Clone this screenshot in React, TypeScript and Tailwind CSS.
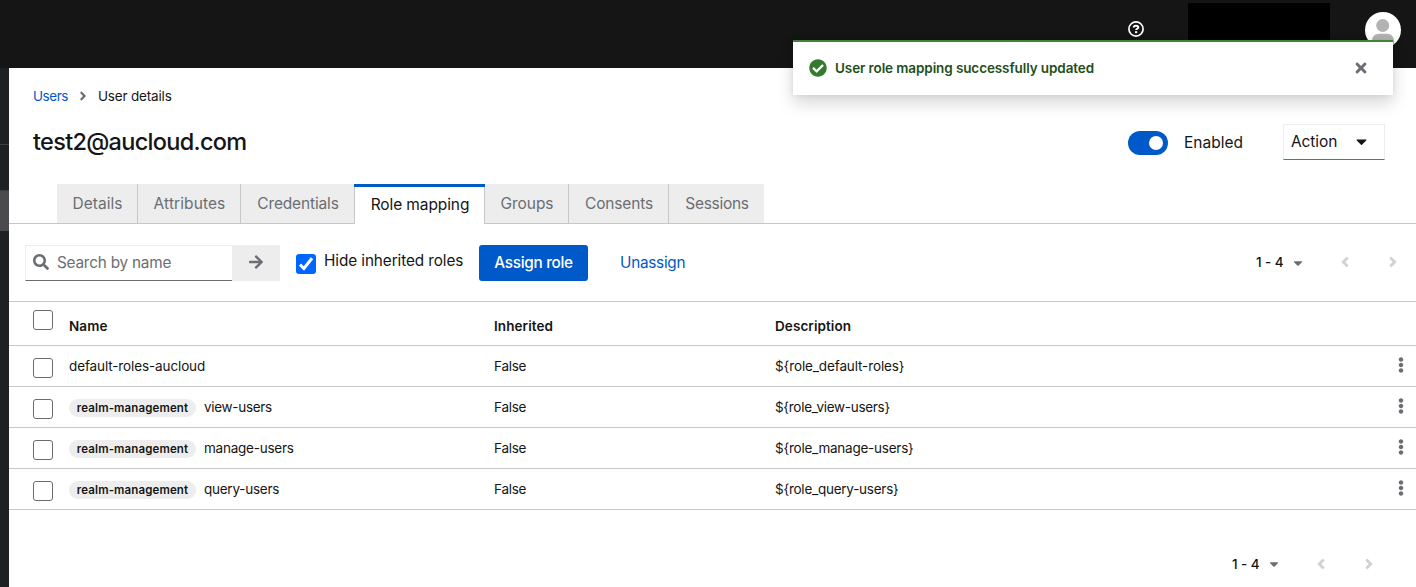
import React from "react";
import {
  FaAngleLeft,
  FaAngleRight,
  FaArrowRight,
  FaCaretDown,
  FaCheckCircle,
  FaEllipsisV,
  FaSearch,
  FaTimes,
} from "react-icons/fa";

const tabs = [
  { label: "Details", box: "w-[81px]", text: "tracking-[0.02px]" },
  { label: "Attributes", box: "w-[103px]", text: "tracking-[0.1px]" },
  { label: "Credentials", box: "w-[114px]", text: "tracking-[-0.15px]" },
  { label: "Role mapping", box: "w-[130px]", text: "tracking-[-0.1px]", active: true },
  { label: "Groups", box: "w-[84px]", text: "tracking-[-0.05px]" },
  { label: "Consents", box: "w-[100px]", text: "tracking-[-0.15px]" },
  { label: "Sessions", box: "w-[95px]", text: "tracking-[-0.3px]" },
];

const rows = [
  {
    client: "",
    name: "default-roles-aucloud",
    description: "${role_default-roles}",
    text: "tracking-[-0.12px]",
  },
  {
    client: "realm-management",
    name: "view-users",
    description: "${role_view-users}",
    text: "tracking-[-0.3px]",
  },
  {
    client: "realm-management",
    name: "manage-users",
    description: "${role_manage-users}",
    text: "tracking-[-0.24px]",
  },
  {
    client: "realm-management",
    name: "query-users",
    description: "${role_query-users}",
    text: "tracking-[-0.25px]",
  },
];

function Checkbox() {
  return <span className="block size-5 shrink-0 rounded-[3px] border border-[#6b6b6b] bg-white" />;
}

function HelpIcon() {
  return (
    <svg viewBox="0 0 16 16" className="size-4" fill="none" stroke="white">
      <circle cx="8" cy="8" r="7.1" strokeWidth="1.7" />
      <path d="M5.700 6.500C5.800 5.100 6.800 4.700 8 4.700c1.300 0 2.300.6 2.300 1.700 0 1.400-2.200 1.300-2.200 2.600" strokeWidth="2" />
      <path d="M7 11.200h2.200" strokeWidth="2" />
    </svg>
  );
}

function Avatar() {
  return (
    <svg viewBox="0 0 36 36" className="size-9">
      <defs>
        <clipPath id="avatar">
          <circle cx="18" cy="18" r="18" />
        </clipPath>
      </defs>
      <g clipPath="url(#avatar)">
        <rect width="36" height="36" fill="#fff" />
        <circle cx="17.7" cy="13.5" r="6.5" fill="#b3b3b3" />
        <path d="M7 36v-7c0-4.500 3-7.300 7-7.300h8c4 0 7 2.800 7 7.300v7z" fill="#b3b3b3" />
      </g>
    </svg>
  );
}

function Pagination() {
  return (
    <div className="flex h-5 items-center text-[#d2d2d2]">
      <span className="w-[35px] whitespace-nowrap text-[13.5px] font-medium tracking-[-0.1px] text-[#151515]">
        1 - 4
      </span>
      <FaCaretDown className="size-[14px] text-[#6a6e73]" />
      <FaAngleLeft className="-mt-px ml-[32px] size-4" stroke="currentColor" strokeWidth="14" />
      <FaAngleRight className="-mt-px ml-[32px] size-4" stroke="currentColor" strokeWidth="14" />
    </div>
  );
}

export default function App() {
  return (
    <div className="relative flex h-[587px] w-[1416px] flex-col overflow-hidden bg-white font-['Inter',sans-serif] text-[#151515]">
      <header className="flex h-[68px] shrink-0 items-start bg-[#151515]">
        <div className="ml-[1128px] mt-[21px]">
          <HelpIcon />
        </div>
        <div className="ml-[44px] mt-[3px] h-[42px] w-[142px] bg-black" />
        <div className="ml-[35px] mt-[12px]">
          <Avatar />
        </div>
      </header>

      <div className="flex min-h-0 flex-1">
        <aside className="flex w-[9px] shrink-0 flex-col bg-[#1e2124]">
          <div className="h-[77px] border-b border-[#3c3f42]" />
          <div className="mt-[45px] h-[41px] border-t border-[#3c3f42] bg-[#4b4b4d]" />
        </aside>

        <main className="flex min-w-0 flex-1 flex-col">
          <nav className="mt-[18px] flex h-5 items-center pl-6 text-[13.5px]">
            <a className="w-[35px] tracking-[-0.45px] text-[#0059c8]">Users</a>
            <FaAngleRight className="-mt-px ml-[8px] mr-[8px] size-[14px] text-[#6a6e73]" />
            <span className="tracking-[-0.18px]">User details</span>
          </nav>

          <div className="flex h-[78px] items-center pb-[6px] pl-6">
            <h1 className="w-[1095px] text-[23.5px] font-medium tracking-[-0.7px]">test2@aucloud.com</h1>
            <span className="mt-[2px] flex h-6 w-10 items-center justify-end rounded-full bg-[#0059c8] pr-[5px]">
              <span className="size-[14px] rounded-full bg-white" />
            </span>
            <span className="ml-4 mt-[2px] w-[99px] text-[15.5px]">Enabled</span>
            <button className="flex h-9 w-[102px] items-center justify-between border border-[#ededed] border-b-[#6a6e73] pl-[7px] pr-[14px] text-[15.5px] tracking-[-0.1px]">
              <span>Action</span>
              <FaCaretDown className="-mt-[2px] size-[17px]" />
            </button>
          </div>

          <div className="flex h-10 shrink-0 border-b border-[#c7c7c7] pl-12">
            {tabs.map((tab) =>
              tab.active ? (
                <div key={tab.label} className={`${tab.box} z-10 -ml-px box-content flex h-10 flex-col pr-px`}>
                  <div className="-mr-px h-[3px] shrink-0 bg-[#0059c8]" />
                  <div
                    className={`${tab.text} -mr-px flex flex-1 items-center justify-center border-x border-[#c7c7c7] bg-white pb-[2px] pl-px text-[15.5px]`}
                  >
                    {tab.label}
                  </div>
                </div>
              ) : (
                <div
                  key={tab.label}
                  className={`${tab.box} ${tab.text} flex h-[39px] items-center justify-center border-r border-[#c7c7c7] bg-[#ededed] pl-px pt-px text-[15.5px] text-[#6a6e73] last:border-r-0`}
                >
                  {tab.label}
                </div>
              ),
            )}
          </div>

          <div className="flex h-[78px] shrink-0 items-center border-b border-[#c7c7c7] pl-4">
            <div className="flex h-9 w-[207px] items-center border border-r-0 border-[#ededed] border-b-[#6a6e73] pl-[7px] text-[#6a6e73]">
              <FaSearch className="-mt-[2px] size-4" />
              <span className="ml-[8px] mt-px text-[15.3px] tracking-[-0.2px]">Search by name</span>
            </div>
            <button className="flex h-9 w-12 items-center justify-center bg-[#ededed] text-[#6a6e73]">
              <FaArrowRight className="-mt-[2px] size-4" />
            </button>
            <span className="ml-4 mt-[2px] flex size-5 items-center justify-center rounded-[3px] bg-[#0066ff]">
              <svg viewBox="0 0 20 20" className="size-5" fill="none" stroke="white" strokeWidth="3">
                <path d="M4 10.600l3.900 3.900L16 4.300" />
              </svg>
            </span>
            <span className="-mt-[3px] ml-2 w-[155px] whitespace-nowrap text-[15.3px] tracking-[-0.08px]">
              Hide inherited roles
            </span>
            <button className="flex h-9 w-[109px] items-center justify-center rounded-[3px] bg-[#0059c8] pt-px text-[15.3px] font-medium tracking-[-0.3px] text-white">
              Assign role
            </button>
            <a className="ml-8 mt-px text-[15.3px] tracking-[-0.25px] text-[#0059c8]">Unassign</a>
            <div className="ml-auto mr-[15px]">
              <Pagination />
            </div>
          </div>

          <div className="flex h-11 shrink-0 border-b border-[#c7c7c7] pl-6 text-[13.5px] font-semibold tracking-[0.08px]">
            <div className="pt-2">
              <Checkbox />
            </div>
            <span className="ml-4 w-[425px] pt-[14px]">Name</span>
            <span className="w-[281px] pt-[14px]">Inherited</span>
            <span className="pt-[14px]">Description</span>
          </div>

          {rows.map((row) => (
            <div key={row.name} className="flex h-[41px] shrink-0 border-b border-[#c7c7c7] pl-6 text-[13.5px]">
              <div className="pt-3">
                <Checkbox />
              </div>
              <div className="ml-4 flex h-10 w-[425px] items-center">
                {row.client && (
                  <span className="mr-2 mt-[2px] flex h-[18px] w-[127px] items-center justify-center rounded-full bg-[#ededed] pt-[2px] text-[11.5px] font-semibold tracking-[0.12px]">
                    {row.client}
                  </span>
                )}
                <span className={row.text}>{row.name}</span>
              </div>
              <span className="flex h-10 w-[281px] items-center tracking-[-0.25px]">False</span>
              <span className={`flex h-10 items-center ${row.text}`}>{row.description}</span>
              <span className="ml-auto mr-[7px] flex h-[38px] items-center text-[#6a6e73]">
                <FaEllipsisV className="size-4" />
              </span>
            </div>
          ))}

          <div className="ml-auto mr-[39px] mt-[44px]">
            <Pagination />
          </div>
        </main>
      </div>

      <div className="absolute left-[793px] top-10 z-20 flex h-[55px] w-[600px] items-center border-t-2 border-[#3e8635] bg-white pb-px pl-4 pr-[24px] shadow-[0_8px_16px_rgba(3,3,3,0.16),0_0_6px_rgba(3,3,3,0.08)]">
        <FaCheckCircle className="size-[18px] text-[#357b2d]" />
        <span className="ml-2 text-[13.5px] font-semibold tracking-[-0.1px] text-[#1e4f18]">
          User role mapping successfully updated
        </span>
        <FaTimes className="ml-auto size-4 text-[#6a6e73]" />
      </div>
    </div>
  );
}
